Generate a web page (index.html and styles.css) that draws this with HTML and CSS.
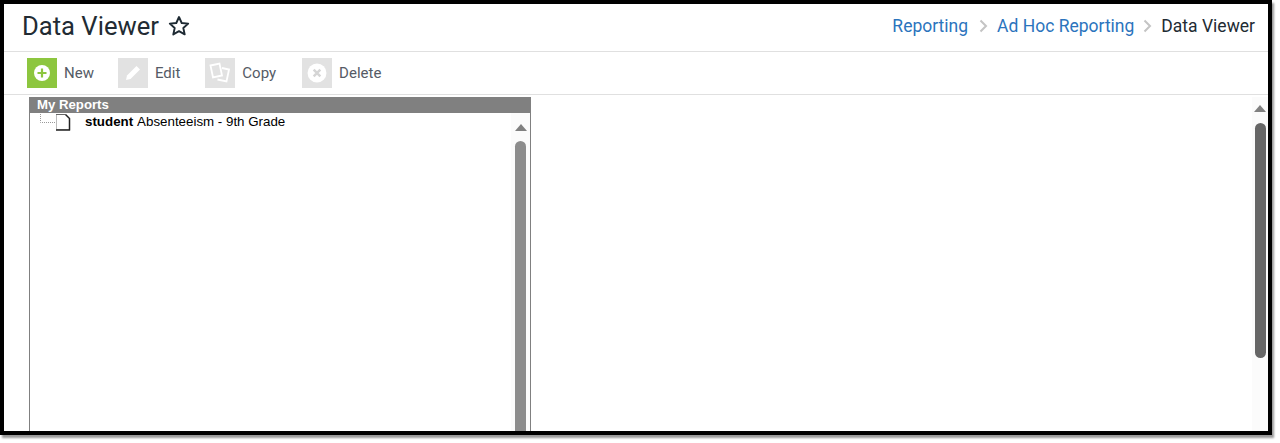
FILE: index.html

```html
<!DOCTYPE html>
<html lang="en">
<head>
  <meta charset="UTF-8">
  <title>Data Viewer</title>
  <link rel="stylesheet" href="styles.css">
</head>
<body>

<div class="frame">
  <div class="page-header">
    <div class="page-title">
      <h1>Data Viewer</h1>
      <svg class="star" width="22" height="22" viewBox="0 0 22 22">
        <path d="M11 2l2.700 6 6.500.6-4.900 4.400 1.400 6.400L11 16.100l-5.700 3.300 1.400-6.400L1.800 8.600l6.500-.6z" fill="none" stroke="#1e2a33" stroke-width="1.900" stroke-linejoin="round"/>
      </svg>
    </div>
    <div class="breadcrumb">
      <a href="#">Reporting</a>
      <svg class="crumb-sep" width="9" height="14" viewBox="0 0 9 14"><path d="M1.500 1.500L7 7l-5.500 5.500" fill="none" stroke="#c4c4c4" stroke-width="2"/></svg>
      <a href="#">Ad Hoc Reporting</a>
      <svg class="crumb-sep" width="9" height="14" viewBox="0 0 9 14"><path d="M1.500 1.500L7 7l-5.500 5.500" fill="none" stroke="#c4c4c4" stroke-width="2"/></svg>
      <span>Data Viewer</span>
    </div>
  </div>

  <div class="toolbar">
    <div class="tool tool-new">
      <span class="tool-icon">
        <svg width="18" height="18" viewBox="0 0 18 18">
          <circle cx="9" cy="9" r="8" fill="#fff"/>
          <path d="M9 4.500v9M4.500 9h9" stroke="#8dc63f" stroke-width="2.200"/>
        </svg>
      </span>
      New
    </div>
    <div class="tool tool-edit">
      <span class="tool-icon">
        <svg width="18" height="18" viewBox="0 0 18 18">
          <path d="M2 16l1-4.500L12.500 2l3.500 3.500L6.500 15z" fill="#fff"/>
        </svg>
      </span>
      Edit
    </div>
    <div class="tool tool-copy">
      <span class="tool-icon">
        <svg width="24" height="22" viewBox="0 0 24 22">
          <path d="M2.500 3.500l9-2 2.500 12-9 2z" fill="none" stroke="#fff" stroke-width="1.800"/>
          <path d="M14 6l7 1.500-2.500 12-9-2" fill="none" stroke="#fff" stroke-width="1.800"/>
        </svg>
      </span>
      Copy
    </div>
    <div class="tool tool-delete">
      <span class="tool-icon">
        <svg width="20" height="20" viewBox="0 0 18 18">
          <circle cx="9" cy="9" r="8.500" fill="#fff"/>
          <path d="M6 6l6 6M12 6l-6 6" stroke="#d5d5d5" stroke-width="2.200"/>
        </svg>
      </span>
      Delete
    </div>
  </div>

  <div class="workspace">
    <div class="report-panel">
      <div class="panel-title">My Reports</div>
      <div class="panel-body">
        <div class="tree-row">
          <svg class="tree-lines" width="16" height="14" viewBox="0 0 16 14">
            <path d="M1.500 0v8.500H16" fill="none" stroke="#999" stroke-dasharray="1 1"/>
          </svg>
          <svg class="page-icon" width="16" height="18" viewBox="0 0 16 18">
            <path d="M1.500 1.500h9l4 4v11h-13z" fill="#fff" stroke="#bbb"/>
            <path d="M1 1.500h9.500" fill="none" stroke="#666"/>
            <path d="M10.500 1.500l4 4v12M1 17h14" fill="none" stroke="#222" stroke-width="1.500"/>
          </svg>
          <span class="tree-label"><b>student</b> Absenteeism - 9th Grade</span>
        </div>
        <div class="scrollbar panel-scroll">
          <span class="scroll-up"></span>
          <span class="scroll-thumb"></span>
        </div>
      </div>
    </div>
    <div class="main-view">
      <div class="scrollbar main-scroll">
        <span class="scroll-up"></span>
        <span class="scroll-thumb"></span>
      </div>
    </div>
  </div>
</div>

</body>
</html>
```

FILE: styles.css

```css
* {
  box-sizing: border-box;
}

html, body {
  margin: 0;
  padding: 0;
  height: 100%;
  background: #fff;
  overflow: hidden;
}

body {
  font-family: Roboto, Arial, sans-serif;
}

.frame {
  width: 1272px;
  height: 435px;
  border: 4px solid #000;
  box-shadow: 2px 3px 2px #999;
  display: flex;
  flex-direction: column;
  background: #fff;
  overflow: hidden;
}

.page-header {
  height: 48px;
  flex: none;
  border-bottom: 1px solid #e0e0e0;
  display: flex;
  justify-content: space-between;
  align-items: center;
  padding: 0 13px 4px 18px;
}

.page-title {
  display: flex;
  align-items: center;
  gap: 9px;
}

.page-title h1 {
  margin: 0;
  font-size: 25.6px;
  font-weight: 400;
  color: #222b33;
}

.breadcrumb {
  display: flex;
  align-items: center;
  gap: 10px;
  font-size: 17.5px;
  color: #222b33;
}

.breadcrumb a {
  color: #2b74bd;
  text-decoration: none;
}

.crumb-sep {
  margin: 0 -1px 0 1px;
}

.crumb-sep:last-of-type {
  margin: 0 -1px;
}

.toolbar {
  height: 43px;
  flex: none;
  border-bottom: 1px solid #e0e0e0;
  display: flex;
  align-items: center;
  padding: 0 0 1px 23px;
}

.tool {
  display: flex;
  align-items: center;
  gap: 7px;
  font-size: 15px;
  color: #555b66;
}

.tool-new { margin-right: 24px; }
.tool-edit { margin-right: 25px; }
.tool-copy { margin-right: 26px; }

.tool-icon {
  width: 30px;
  height: 30px;
  background: #e2e2e2;
  display: flex;
  align-items: center;
  justify-content: center;
}

.tool-new .tool-icon {
  background: #8dc63f;
}

.workspace {
  flex: 1;
  display: flex;
  min-height: 0;
  padding-top: 2px;
}

.report-panel {
  width: 502px;
  margin-left: 25px;
  display: flex;
  flex-direction: column;
  border-left: 1px solid #808080;
  border-right: 1px solid #808080;
}

.panel-title {
  height: 16px;
  margin: 0 -1px;
  flex: none;
  background: #808080;
  color: #fff;
  font-family: "Liberation Sans", Arial, sans-serif;
  font-size: 13.2px;
  font-weight: bold;
  line-height: 16px;
  padding-left: 8px;
}

.panel-body {
  flex: 1;
  display: flex;
  justify-content: space-between;
  min-height: 0;
}

.tree-row {
  display: flex;
  align-items: flex-start;
  height: 18px;
  padding: 1px 0 0 9px;
  font-family: "Liberation Sans", Arial, sans-serif;
  font-size: 13.33px;
  color: #000;
}

.tree-row b {
  margin-right: 1px;
}

.tree-lines {
  flex: none;
}

.page-icon {
  flex: none;
  margin: -1px 13px 0 0;
}

.tree-label {
  line-height: 16px;
  margin-left: 1px;
}

.scrollbar {
  flex: none;
  display: flex;
  flex-direction: column;
  align-items: center;
  background: #fbfbfb;
  overflow: hidden;
}

.scroll-up {
  flex: none;
  width: 0;
  height: 0;
  border-left: 6px solid transparent;
  border-right: 6px solid transparent;
  border-bottom: 7px solid #808080;
}

.scroll-thumb {
  flex: none;
  width: 11px;
  border-radius: 6px;
}

.panel-scroll {
  width: 19px;
  padding: 11px 0 0 0;
}

.panel-scroll .scroll-thumb {
  height: 320px;
  margin-top: 10px;
  background: #8c8c8c;
  border-radius: 6px 6px 0 0;
}

.main-view {
  flex: 1;
  display: flex;
  justify-content: flex-end;
}

.main-scroll {
  width: 16px;
  padding-top: 8px;
}

.main-scroll .scroll-thumb {
  height: 235px;
  margin-top: 11px;
  background: #666;
}
```
